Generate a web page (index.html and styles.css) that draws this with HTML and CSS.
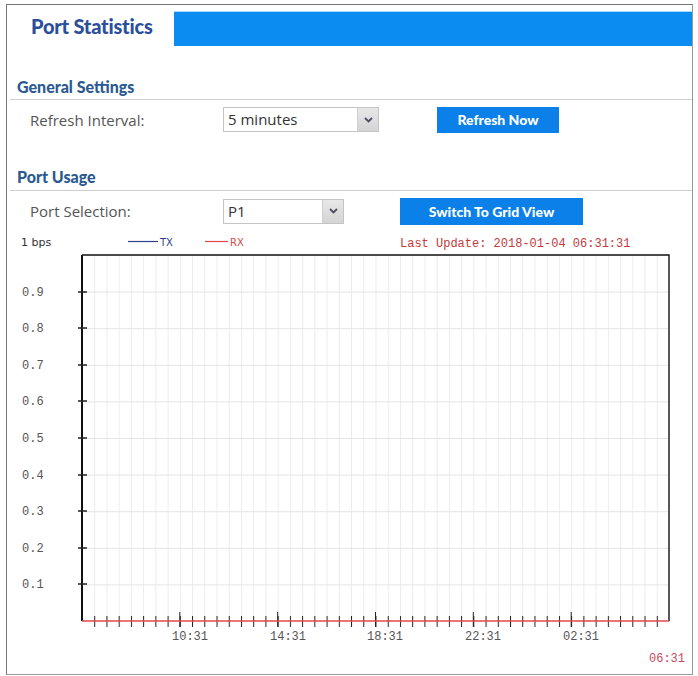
FILE: index.html
```html
<!DOCTYPE html>
<html lang="en">
<head>
    <meta charset="UTF-8">
    <meta name="viewport" content="width=device-width, initial-scale=1.0">
    <title>Port Statistics</title>
    <link rel="stylesheet" href="styles.css">
</head>
<body>
    <div class="frame">
        <div class="header">
            <h1 class="title">Port Statistics</h1>
            <div class="title-bar"></div>
        </div>

        <h2 class="section">General Settings</h2>
        <div class="row row-refresh">
            <span class="label">Refresh Interval:</span>
            <div class="select select-wide">
                <span class="select-value">5 minutes</span>
                <span class="select-arrow">
                    <svg width="9" height="6" viewBox="0 0 9 6"><path d="M1 1l3.5 3.5L8 1" fill="none" stroke="#4a5160" stroke-width="1.8"/></svg>
                </span>
            </div>
            <button class="btn btn-refresh">Refresh Now</button>
        </div>

        <h2 class="section section-usage">Port Usage</h2>
        <div class="row row-port">
            <span class="label">Port Selection:</span>
            <div class="select select-narrow">
                <span class="select-value">P1</span>
                <span class="select-arrow">
                    <svg width="9" height="6" viewBox="0 0 9 6"><path d="M1 1l3.5 3.5L8 1" fill="none" stroke="#4a5160" stroke-width="1.8"/></svg>
                </span>
            </div>
            <button class="btn btn-grid">Switch To Grid View</button>
        </div>

        <!-- usage chart: 24h window, 30 min ticks -->
        <svg class="chart" width="685" height="441" viewBox="0 0 685 441">
            <defs>
                <pattern id="vgrid" x="75" y="0" width="12.229" height="441" patternUnits="userSpaceOnUse">
                    <line x1="0.5" y1="0" x2="0.5" y2="441" stroke="#ececec"/>
                </pattern>
                <pattern id="hgrid" x="0" y="23" width="685" height="36.6" patternUnits="userSpaceOnUse">
                    <line x1="0" y1="0.5" x2="685" y2="0.5" stroke="#e4e4e4"/>
                </pattern>
                <pattern id="ticks" x="75" y="0" width="12.229" height="441" patternUnits="userSpaceOnUse">
                    <line x1="0.5" y1="384" x2="0.5" y2="395" stroke="#222"/>
                </pattern>
            </defs>

            <text class="unit" x="14" y="14">1 bps</text>
            <line x1="121" y1="9.5" x2="151" y2="9.5" stroke="#2e3f8c" stroke-width="1.2"/>
            <text class="legend" x="153" y="14">TX</text>
            <line x1="198" y1="9.5" x2="221" y2="9.5" stroke="#e04848" stroke-width="1.2"/>
            <text class="legend legend-rx" x="223" y="14">RX</text>
            <text class="update" x="393" y="15">Last Update: 2018-01-04 06:31:31</text>

            <rect x="76" y="23" width="586" height="366" fill="url(#vgrid)"/>
            <rect x="75" y="24" width="587" height="365" fill="url(#hgrid)"/>

            <path d="M75 23V389M75 23H662V389" fill="none" stroke="#111" stroke-width="1.4"/>
            <path d="M75 23V389" stroke="#111" stroke-width="2"/>
            <rect x="80" y="380" width="580" height="16" fill="url(#ticks)"/>
            <path d="M172.8 380V395M270.7 380V395M368.5 380V395M466.3 380V395M564.2 380V395" stroke="#222"/>
            <line x1="75" y1="389" x2="662" y2="389" stroke="#e04848" stroke-width="1.6"/>
            <path d="M71 60h9M71 96h9M71 133h9M71 169h9M71 206h9M71 243h9M71 279h9M71 316h9M71 352h9" stroke="#222" stroke-width="1.4"/>

            <g class="ylabels">
                <text x="15" y="64">0.9</text>
                <text x="15" y="100">0.8</text>
                <text x="15" y="137">0.7</text>
                <text x="15" y="173">0.6</text>
                <text x="15" y="210">0.5</text>
                <text x="15" y="247">0.4</text>
                <text x="15" y="283">0.3</text>
                <text x="15" y="320">0.2</text>
                <text x="15" y="356">0.1</text>
            </g>
            <g class="xlabels">
                <text x="165" y="408">10:31</text>
                <text x="263" y="408">14:31</text>
                <text x="360" y="408">18:31</text>
                <text x="458" y="408">22:31</text>
                <text x="556" y="408">02:31</text>
            </g>
            <text class="now" x="642" y="430">06:31</text>
        </svg>
    </div>
</body>
</html>
```

FILE: styles.css
```css
body {
    margin: 0;
    background: #fff;
    font-family: "Open Sans", Arial, sans-serif;
}
.frame {
    margin: 4px 5px 0 6px;
    height: 669px;
    border: 1px solid #777;
    border-right-color: #999;
    border-bottom-color: #999;
    overflow: hidden;
}
.header {
    display: flex;
    margin-top: 6px;
    height: 35px;
}
.title {
    width: 167px;
    margin: 0;
    padding-left: 24px;
    box-sizing: border-box;
    font-family: Lato, "Open Sans", sans-serif;
    font-size: 20px;
    font-weight: 900;
    line-height: 30px;
    color: #2c4f9c;
    letter-spacing: -0.2px;
}
.title-bar {
    flex: 1;
    background: #0a8cf0;
    border-top: 1px solid #a6dbff;
}
.section {
    margin: 29px 0 0 3px;
    padding-left: 7px;
    height: 24px;
    line-height: 24px;
    font-family: Lato, "Open Sans", sans-serif;
    font-size: 16px;
    font-weight: 900;
    color: #2b5a92;
    border-bottom: 1px solid #cfcfcf;
}
.section-usage {
    margin-top: 33px;
    line-height: 21px;
}
.row {
    display: flex;
    align-items: center;
    margin-top: 6px;
}
.row-refresh {
    height: 27px;
}
.row-port {
    height: 28px;
}
.label {
    width: 216px;
    padding-left: 23px;
    box-sizing: border-box;
    font-size: 15px;
    color: #555;
}
.select {
    display: flex;
    height: 25px;
    box-sizing: border-box;
    border: 1px solid #c4c4c4;
    background: #fff;
}
.select-wide {
    width: 156px;
}
.select-narrow {
    width: 121px;
}
.select-value {
    flex: 1;
    padding-left: 4px;
    font-size: 15px;
    line-height: 22px;
    color: #333;
}
.select-arrow {
    width: 20px;
    display: flex;
    align-items: center;
    justify-content: center;
    background: linear-gradient(#e8e8e8, #d4d4d4);
    border-left: 1px solid #d0d0d0;
}
.btn {
    height: 26px;
    border: none;
    background: #0a80e8;
    color: #fff;
    font-family: Lato, "Open Sans", sans-serif;
    font-size: 14px;
    font-weight: 900;
    padding: 0;
}
.btn-refresh {
    width: 122px;
    margin-left: 58px;
}
.btn-grid {
    width: 183px;
    height: 27px;
    margin-left: 56px;
}
.chart {
    display: block;
    margin-top: 7px;
}
.unit {
    font-family: "DejaVu Sans", sans-serif;
    font-size: 11px;
    fill: #333;
}
.legend {
    font-family: "DejaVu Sans", sans-serif;
    font-size: 10px;
    fill: #2e3f8c;
}
.legend-rx {
    fill: #d84848;
}
.update {
    font-family: "Liberation Mono", monospace;
    font-size: 12px;
    fill: #c43a3a;
}
.ylabels text,
.xlabels text {
    font-family: "Liberation Mono", monospace;
    font-size: 12px;
    fill: #555;
}
.now {
    font-family: "Liberation Mono", monospace;
    font-size: 12px;
    fill: #d0485a;
}
```
